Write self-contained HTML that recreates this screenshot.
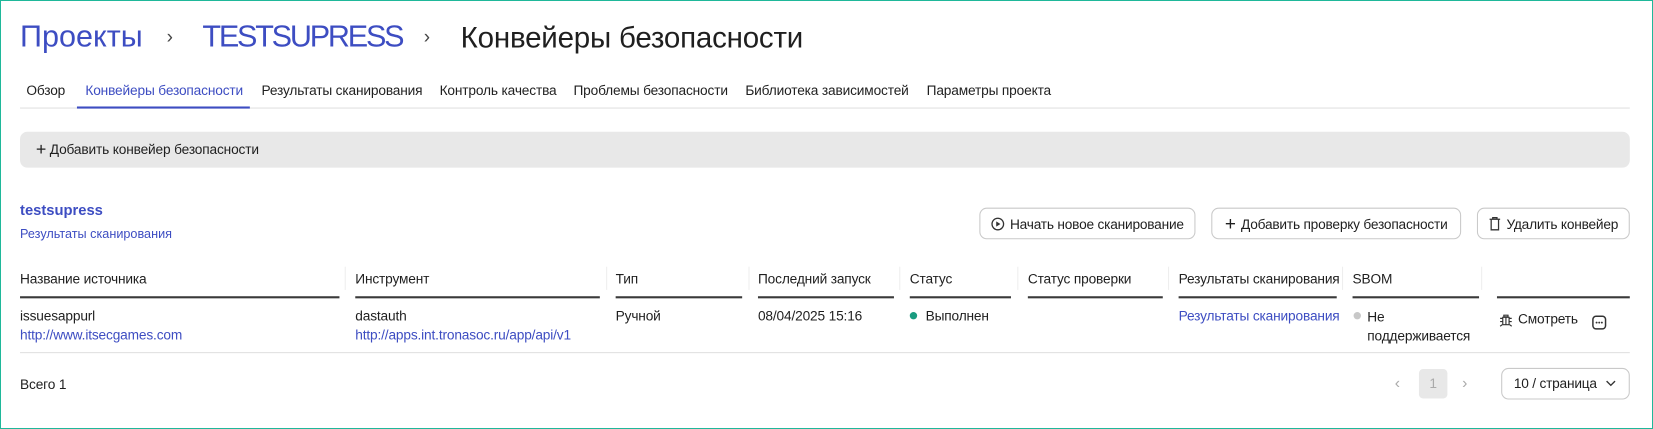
<!DOCTYPE html>
<html><head><meta charset="utf-8"><style>
*{margin:0;padding:0;box-sizing:border-box}
body{width:1653px;height:429px;background:#fff;font-family:"Liberation Sans",sans-serif;color:#1f1f1f;position:relative;overflow:hidden}
.frame{position:absolute;left:0;top:0;width:1653px;height:429px;border:1px solid #1fb89a;z-index:5}
.wrap{position:absolute;left:0;top:0;width:1568px;height:407px;transform:scale(1.0542);transform-origin:0 0}
.a{position:absolute;white-space:nowrap}
.t{font-size:13px;letter-spacing:-0.15px}
.blue{color:#3d4dc2}
.h1{font-size:28px;top:20px}
.line{position:absolute;height:1px;background:#e0e0e0}
.hl{position:absolute;height:2px;background:#3a3a3a;top:281px}
.btn{position:absolute;top:197px;height:30px;border:1px solid #c9c9c9;border-radius:7px;font-size:13px;letter-spacing:-0.2px;display:flex;align-items:center;justify-content:center;gap:5px;background:#fff}
.vs{position:absolute;top:253px;width:1px;height:22px;background:#eee}
</style></head><body>
<div class="frame"></div>
<div class="wrap">
<div class="a h1 blue" style="left:19px;font-size:29px;top:19px">Проекты</div>
<div class="a" style="left:158px;top:25px;font-size:18px;color:#444">›</div>
<div class="a h1 blue" style="left:192px;letter-spacing:-2.1px;font-size:29px;top:19px">TESTSUPRESS</div>
<div class="a" style="left:402px;top:25px;font-size:18px;color:#444">›</div>
<div class="a h1" style="left:437px;letter-spacing:-0.2px">Конвейеры безопасности</div>

<div class="a t" style="left:25px;top:78px">Обзор</div>
<div class="a t blue" style="left:81px;top:78px">Конвейеры безопасности</div>
<div class="a t" style="left:248px;top:78px">Результаты сканирования</div>
<div class="a t" style="left:417px;top:78px">Контроль качества</div>
<div class="a t" style="left:544px;top:78px">Проблемы безопасности</div>
<div class="a t" style="left:707px;top:78px">Библиотека зависимостей</div>
<div class="a t" style="left:879px;top:78px">Параметры проекта</div>
<div class="line" style="left:19px;top:102px;width:1527px"></div>
<div style="position:absolute;left:73px;top:101px;width:164px;height:2px;background:#3d4dc2"></div>

<div style="position:absolute;left:19px;top:125px;width:1527px;height:34px;background:#e8e8e8;border-radius:7px"></div>
<div class="a t" style="left:34px;top:134px"><span style="font-size:17px;line-height:13px;position:relative;top:1px">+</span> Добавить конвейер безопасности</div>

<div class="a blue" style="left:19px;top:191px;font-size:14px;font-weight:bold">testsupress</div>
<div class="a blue" style="left:19px;top:215px;font-size:12px">Результаты сканирования</div>

<div class="btn" style="left:929px;width:205px"><svg width="13" height="13" viewBox="0 0 13 13"><circle cx="6.5" cy="6.5" r="5.5" fill="none" stroke="#333" stroke-width="1.2"/><path d="M5 4v5l4-2.5z" fill="#333"/></svg>Начать новое сканирование</div>
<div class="btn" style="left:1149px;width:237px"><span style="font-size:18px;line-height:13px">+</span>Добавить проверку безопасности</div>
<div class="btn" style="left:1401px;width:145px"><svg width="12" height="14" viewBox="0 0 12 14"><path d="M1 3h10M4 3V1.5h4V3M2.5 3v10h7V3" fill="none" stroke="#333" stroke-width="1.2"/></svg>Удалить конвейер</div>

<div class="a t" style="left:19px;top:257px">Название источника</div>
<div class="a t" style="left:337px;top:257px">Инструмент</div>
<div class="a t" style="left:584px;top:257px">Тип</div>
<div class="a t" style="left:719px;top:257px">Последний запуск</div>
<div class="a t" style="left:863px;top:257px">Статус</div>
<div class="a t" style="left:975px;top:257px">Статус проверки</div>
<div class="a t" style="left:1118px;top:257px">Результаты сканирования</div>
<div class="a t" style="left:1283px;top:257px">SBOM</div>
<div class="vs" style="left:327px"></div><div class="vs" style="left:575px"></div><div class="vs" style="left:710px"></div><div class="vs" style="left:853px"></div><div class="vs" style="left:965px"></div><div class="vs" style="left:1108px"></div><div class="vs" style="left:1273px"></div><div class="vs" style="left:1405px"></div>
<div class="hl" style="left:19px;width:303px"></div>
<div class="hl" style="left:337px;width:232px"></div>
<div class="hl" style="left:584px;width:120px"></div>
<div class="hl" style="left:719px;width:129px"></div>
<div class="hl" style="left:863px;width:96px"></div>
<div class="hl" style="left:975px;width:128px"></div>
<div class="hl" style="left:1118px;width:150px"></div>
<div class="hl" style="left:1283px;width:120px"></div>
<div class="hl" style="left:1420px;width:126px"></div>

<div class="a t" style="left:19px;top:292px">issuesappurl</div>
<div class="a t blue" style="left:19px;top:310px">http://www.itsecgames.com</div>
<div class="a t" style="left:337px;top:292px">dastauth</div>
<div class="a t blue" style="left:337px;top:310px">http://apps.int.tronasoc.ru/app/api/v1</div>
<div class="a t" style="left:584px;top:292px">Ручной</div>
<div class="a t" style="left:719px;top:292px">08/04/2025 15:16</div>
<div style="position:absolute;left:863px;top:296px;width:7px;height:7px;border-radius:50%;background:#1a9c80"></div>
<div class="a t" style="left:878px;top:292px">Выполнен</div>
<div class="a t blue" style="left:1118px;top:292px">Результаты сканирования</div>
<div style="position:absolute;left:1284px;top:296px;width:7px;height:7px;border-radius:50%;background:#c8c8c8"></div>
<div class="a t" style="left:1297px;top:292px;line-height:18px">Не<br>поддерживается</div>
<svg style="position:absolute;left:1422px;top:297px" width="13" height="13" viewBox="0 0 13 13"><path d="M4 2h5M4.5 2v1.5h4V2M3.5 4h6v7h-6zM1 5h2.5M1 8h2.5M9.5 5H12M9.5 8H12M6.5 4v7M3 11l-2 1.5M10 11l2 1.5" fill="none" stroke="#333" stroke-width="1.1"/></svg>
<div class="a t" style="left:1440px;top:295px">Смотреть</div>
<svg style="position:absolute;left:1510px;top:299px" width="14" height="14" viewBox="0 0 14 14"><rect x="1" y="1" width="12" height="12" rx="3" fill="none" stroke="#333" stroke-width="1.4"/><circle cx="4.5" cy="7" r="0.9" fill="#333"/><circle cx="7" cy="7" r="0.9" fill="#333"/><circle cx="9.5" cy="7" r="0.9" fill="#333"/></svg>
<div class="line" style="left:19px;top:334px;width:1527px"></div>

<div class="a t" style="left:19px;top:357px">Всего 1</div>
<div class="a" style="left:1323px;top:355px;font-size:15px;color:#aaa">‹</div>
<div style="position:absolute;left:1346px;top:350px;width:27px;height:28px;background:#e8e8e8;border-radius:4px;color:#aaa;font-size:13px;text-align:center;line-height:28px">1</div>
<div class="a" style="left:1387px;top:355px;font-size:15px;color:#aaa">›</div>
<div style="position:absolute;left:1424px;top:349px;width:122px;height:30px;border:1px solid #c9c9c9;border-radius:7px;font-size:13px;line-height:28px;padding-left:11px;letter-spacing:-0.2px">10 / страница <svg style="position:absolute;right:12px;top:10px" width="10" height="7" viewBox="0 0 10 7"><path d="M1 1.5l4 4 4-4" fill="none" stroke="#333" stroke-width="1.3"/></svg></div>
</div>
</body></html>
